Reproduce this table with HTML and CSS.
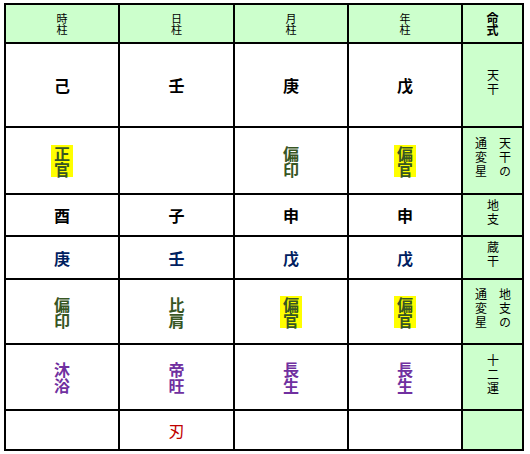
FILE: index.html
```html
<!DOCTYPE html>
<html lang="ja">
<head>
<meta charset="utf-8">
<title>命式</title>
<link rel="stylesheet" href="styles.css">
</head>
<body>
<table class="meishiki">
  <colgroup>
    <col class="c-pillar"><col class="c-pillar2"><col class="c-pillar"><col class="c-pillar"><col class="c-label">
  </colgroup>
  <tr class="r-head">
    <th>時<br>柱</th>
    <th>日<br>柱</th>
    <th>月<br>柱</th>
    <th>年<br>柱</th>
    <th class="head-label">命<br>式</th>
  </tr>
  <tr class="r-kan">
    <td class="v">己</td>
    <td class="v">壬</td>
    <td class="v">庚</td>
    <td class="v">戊</td>
    <td class="label"><span class="vt">天干</span></td>
  </tr>
  <tr class="r-kantsu">
    <td class="v tsu"><span class="hl">正<br>官</span></td>
    <td class="v tsu"></td>
    <td class="v tsu">偏<br>印</td>
    <td class="v tsu"><span class="hl">偏<br>官</span></td>
    <td class="label"><span class="vt two">天干の通変星</span></td>
  </tr>
  <tr class="r-shi">
    <td class="v">酉</td>
    <td class="v">子</td>
    <td class="v">申</td>
    <td class="v">申</td>
    <td class="label"><span class="vt">地支</span></td>
  </tr>
  <tr class="r-zou">
    <td class="v zou">庚</td>
    <td class="v zou">壬</td>
    <td class="v zou">戊</td>
    <td class="v zou">戊</td>
    <td class="label"><span class="vt">蔵干</span></td>
  </tr>
  <tr class="r-shitsu">
    <td class="v tsu">偏<br>印</td>
    <td class="v tsu">比<br>肩</td>
    <td class="v tsu"><span class="hl">偏<br>官</span></td>
    <td class="v tsu"><span class="hl">偏<br>官</span></td>
    <td class="label"><span class="vt two">地支の通変星</span></td>
  </tr>
  <tr class="r-unsei">
    <td class="v un">沐<br>浴</td>
    <td class="v un">帝<br>旺</td>
    <td class="v un">長<br>生</td>
    <td class="v un">長<br>生</td>
    <td class="label"><span class="vt">十二運</span></td>
  </tr>
  <tr class="r-extra">
    <td class="v"></td>
    <td class="v red">刃</td>
    <td class="v"></td>
    <td class="v"></td>
    <td class="label"></td>
  </tr>
</table>
</body>
</html>
```
FILE: styles.css
```css
html, body {
  margin: 0;
  padding: 0;
  background: #ffffff;
}
body {
  padding: 3px 0 0 4px;
  font-family: "Noto Sans CJK JP", "Noto Sans", sans-serif;
  color: #000000;
}
.meishiki {
  border-collapse: collapse;
  width: 520px;
  table-layout: fixed;
}
.meishiki th,
.meishiki td {
  border: 2px solid #000000;
  padding: 0;
  text-align: center;
  vertical-align: middle;
}
.c-pillar { width: 114px; }
.c-pillar2 { width: 115px; }
.c-label { width: 61px; }

.r-head { height: 39px; }
.r-kan { height: 84px; }
.r-kantsu { height: 67px; }
.r-shi { height: 42px; }
.r-zou { height: 43px; }
.r-shitsu { height: 65px; }
.r-unsei { height: 66px; }
.r-extra { height: 40px; }

.r-head th {
  background: #ccffcc;
  font-size: 11px;
  line-height: 11px;
  font-weight: normal;
  padding-top: 1px;
}
.r-head th.head-label {
  font-weight: bold;
  font-size: 12px;
  line-height: 12px;
}
.label {
  background: #ccffcc;
}
.vt {
  display: inline-block;
  writing-mode: vertical-rl;
  text-orientation: upright;
  font-size: 12px;
  letter-spacing: 2px;
  line-height: 14px;
}
.vt.two {
  line-height: 24px;
  height: 42px;
}
.v {
  font-size: 16px;
  line-height: 16px;
  font-weight: bold;
}
.tsu { color: #375623; }
.zou { color: #002060; }
.un { color: #7030a0; }
.red {
  color: #c00000;
  font-weight: normal;
  padding-bottom: 5px;
}
.hl {
  display: inline-block;
  background: #ffff00;
  padding: 0 3px;
}
```
